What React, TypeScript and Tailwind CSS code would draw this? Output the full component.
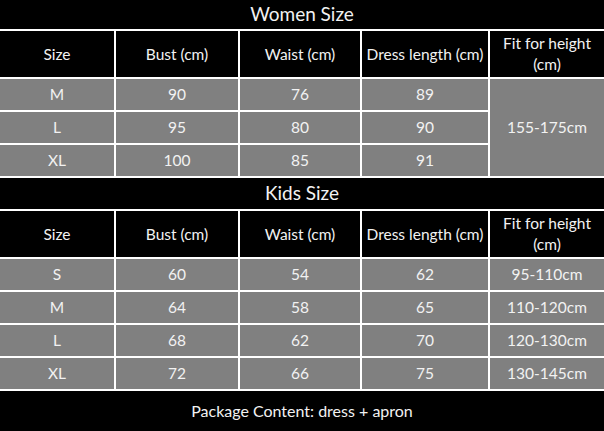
import React from "react";

const H = ({ children }: { children: React.ReactNode }) => (
  <div className="bg-black flex items-center justify-center text-center leading-[21px]">{children}</div>
);
const C = ({ children, cls = "" }: { children: React.ReactNode; cls?: string }) => (
  <div className={"bg-[#808080] flex items-center justify-center text-center " + cls}>{children}</div>
);

export default function App() {
  const women = [
    ["M", "90", "76", "89"],
    ["L", "95", "80", "90"],
    ["XL", "100", "85", "91"],
  ];
  const kids = [
    ["S", "60", "54", "62", "95-110cm"],
    ["M", "64", "58", "65", "110-120cm"],
    ["L", "68", "62", "70", "120-130cm"],
    ["XL", "72", "66", "75", "130-145cm"],
  ];
  const header = (
    <>
      <H>Size</H>
      <H>Bust (cm)</H>
      <H>Waist (cm)</H>
      <H>Dress length (cm)</H>
      <H>
        Fit for height
        <br />
        (cm)
      </H>
    </>
  );
  return (
    <div
      className="w-[604px] h-[431px] bg-white grid grid-cols-[114px_122px_120px_126px_114px] grid-rows-[29px_46px_31px_31px_31px_31px_46px_31px_31px_31px_31px_40px] gap-[2px] text-[15.5px] text-[#f2f2f2]"
      style={{ fontFamily: "Lato, 'Open Sans', sans-serif" }}
    >
      <div className="col-span-5 bg-black flex items-center justify-center text-[19px]">Women Size</div>
      {header}
      {women.map((r, i) => (
        <React.Fragment key={i}>
          {r.map((v, j) => (
            <C key={j}>{v}</C>
          ))}
          {i === 0 && <C cls="row-span-3">155-175cm</C>}
        </React.Fragment>
      ))}
      <div className="col-span-5 bg-black flex items-center justify-center text-[19px]">Kids Size</div>
      {header}
      {kids.map((r, i) => (
        <React.Fragment key={i}>
          {r.map((v, j) => (
            <C key={j}>{v}</C>
          ))}
        </React.Fragment>
      ))}
      <div className="col-span-5 bg-black flex items-center justify-center text-[16px]">Package Content: dress + apron</div>
    </div>
  );
}
